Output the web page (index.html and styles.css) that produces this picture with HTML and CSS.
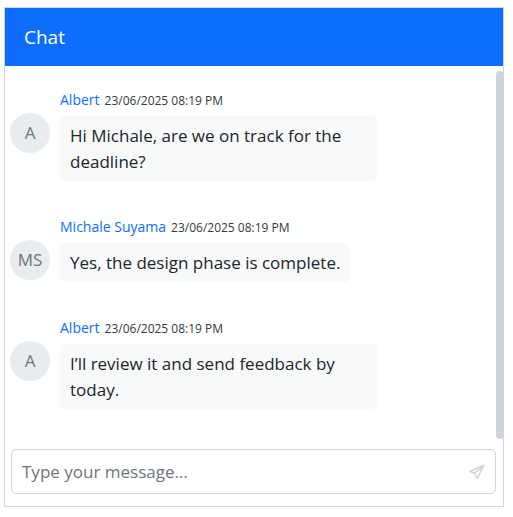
FILE: index.html
```
<!DOCTYPE html>
<html lang="en">
<head>
<meta charset="utf-8">
<title>Chat</title>
<link rel="stylesheet" href="styles.css">
</head>
<body>
<main class="chat">
  <header class="chat-header"><h1 class="chat-title">Chat</h1></header>
  <section class="messages">
    <article class="message">
      <div class="avatar">A</div>
      <div class="content">
        <div class="meta"><span class="author">Albert</span><time class="time">23/06/2025 08:19 PM</time></div>
        <p class="bubble">Hi Michale, are we on track for the deadline?</p>
      </div>
    </article>
    <article class="message">
      <div class="avatar">MS</div>
      <div class="content">
        <div class="meta"><span class="author">Michale Suyama</span><time class="time">23/06/2025 08:19 PM</time></div>
        <p class="bubble">Yes, the design phase is complete.</p>
      </div>
    </article>
    <article class="message">
      <div class="avatar">A</div>
      <div class="content">
        <div class="meta"><span class="author">Albert</span><time class="time">23/06/2025 08:19 PM</time></div>
        <p class="bubble">I’ll review it and send feedback by today.</p>
      </div>
    </article>
    <div class="scroll-thumb"></div>
  </section>
  <form class="composer">
    <div class="field">
      <input class="field-input" type="text" placeholder="Type your message…" aria-label="Message">
      <button class="send" type="button" aria-label="Send">
        <svg class="send-icon" viewBox="0 0 16 16" aria-hidden="true"><path d="M14.800 1.200 1 7.200 5.500 9.300 8.300 14.500Z M14.800 1.200 5.500 9.300"/></svg>
      </button>
    </div>
  </form>
</main>
</body>
</html>
```
FILE: styles.css
```
* { box-sizing: border-box; }

body {
  margin: 7px 9px 10px 4px;
  background: #fff;
  color: #212529;
  font-family: "Segoe UI", "Open Sans", "Noto Sans", sans-serif;
  font-size: 17px;
  line-height: 26px;
}

.chat { border: 1px solid #ced4da; }

.chat-header {
  padding: 16px 19px;
  background: #0d6efd;
  color: #fff;
}

.chat-title {
  margin: 0;
  font-size: 19px;
  font-weight: 400;
  line-height: 26px;
}

.messages {
  position: relative;
  display: flex;
  flex-direction: column;
  gap: 35px;
  padding: 23px 5px 40px;
}

.message {
  display: flex;
  align-items: flex-start;
  gap: 10px;
}

.avatar {
  flex: none;
  width: 40px;
  height: 40px;
  margin-top: 24px;
  border-radius: 50%;
  background: #e9ecef;
  color: #6c757d;
  line-height: 40px;
  text-align: center;
}

.content {
  display: flex;
  flex: 1;
  flex-direction: column;
  align-items: flex-start;
  gap: 4px;
}

.meta {
  display: flex;
  align-items: baseline;
  gap: 5px;
  line-height: 22px;
}

.author {
  color: #0d6efd;
  font-size: 14px;
}

.time {
  color: #343a40;
  font-size: 12px;
}

.bubble {
  max-width: 318px;
  margin: 0;
  padding: 7px 10px 6px;
  border-radius: 5px;
  background: #f8f9fa;
}

.scroll-thumb {
  position: absolute;
  top: 5px;
  right: -1px;
  bottom: 10px;
  width: 8px;
  border-radius: 4px;
  background: #ced4da;
}

.composer { padding: 0 7px 12px 6px; }

.field {
  display: flex;
  align-items: center;
  height: 45px;
  padding: 0 10px;
  border: 1px solid #ced4da;
  border-radius: 5px;
}

.field-input {
  flex: 1;
  min-width: 0;
  padding: 0;
  border: 0;
  outline: 0;
  background: none;
  color: inherit;
  font: inherit;
}

.field-input::placeholder {
  color: #6c757d;
  opacity: 1;
}

.send {
  display: flex;
  padding: 0;
  border: 0;
  background: none;
}

.send-icon {
  width: 16px;
  height: 16px;
  fill: none;
  stroke: #ced4da;
  stroke-width: 1.500;
  stroke-linejoin: round;
}
```
